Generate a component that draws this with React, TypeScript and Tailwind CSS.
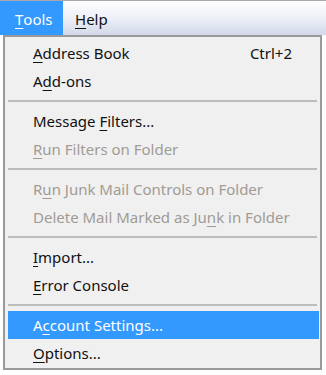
import type { ReactNode } from 'react';

type Item = {
  label: ReactNode;
  shortcut?: string;
  disabled?: boolean;
  active?: boolean;
};

// underline the mnemonic letter at index i
function mn(text: string, i: number) {
  return (
    <>
      {text.slice(0, i)}
      <span className="underline underline-offset-[3px]">{text[i]}</span>
      {text.slice(i + 1)}
    </>
  );
}

const groups: Item[][] = [
  [
    { label: mn('Address Book', 0), shortcut: 'Ctrl+2' },
    { label: mn('Add-ons', 1) },
  ],
  [
    { label: mn('Message Filters...', 8) },
    { label: mn('Run Filters on Folder', 0), disabled: true },
  ],
  [
    { label: mn('Run Junk Mail Controls on Folder', 1), disabled: true },
    { label: mn('Delete Mail Marked as Junk in Folder', 24), disabled: true },
  ],
  [
    { label: mn('Import...', 0) },
    { label: mn('Error Console', 0) },
  ],
  [
    { label: mn('Account Settings...', 1), active: true },
    { label: mn('Options...', 0) },
  ],
];

function MenuRow({ item }: { item: Item }) {
  const color = item.active
    ? 'bg-[#3399ff] text-white'
    : item.disabled
      ? 'text-[#a09b95]'
      : 'text-[#111]';
  return (
    <div className={`flex items-center justify-between h-[28px] pl-[25px] pr-[27px] ${color}`}>
      <span>{item.label}</span>
      {item.shortcut && <span>{item.shortcut}</span>}
    </div>
  );
}

export default function App() {
  return (
    <div
      className="w-[326px] h-[375px] bg-white text-[15px] leading-none overflow-hidden"
      style={{ fontFamily: '"Noto Sans", "Open Sans", sans-serif' }}
    >
      {/* Menu bar */}
      <div className="flex h-[35px] border-t border-[#a8a8a8] bg-gradient-to-b from-[#fdfdfe] via-[#eef0f7] to-[#d3d9ea]">
        <div className="flex items-center w-[63px] pl-[15px] pt-[2px] bg-[#3399ff] text-white">
          {mn('Tools', 0)}
        </div>
        <div className="flex items-center pl-[12px] pt-[2px] text-[#111]">{mn('Help', 0)}</div>
      </div>

      {/* Dropdown */}
      <div className="ml-[3px] w-[319px] border-2 border-[#9a9a9a] bg-[#f0f0f0] pt-[2px] pb-[1px] pl-[3px] pr-[1px]">
        {groups.map((g, gi) => (
          <div key={gi}>
            {gi > 0 && (
              <div className="flex items-center h-[12px] pr-[2px]">
                <div className="w-full h-[2px] bg-[#bdbdbd]" />
              </div>
            )}
            {g.map((item, ii) => (
              <MenuRow key={ii} item={item} />
            ))}
          </div>
        ))}
      </div>
    </div>
  );
}
